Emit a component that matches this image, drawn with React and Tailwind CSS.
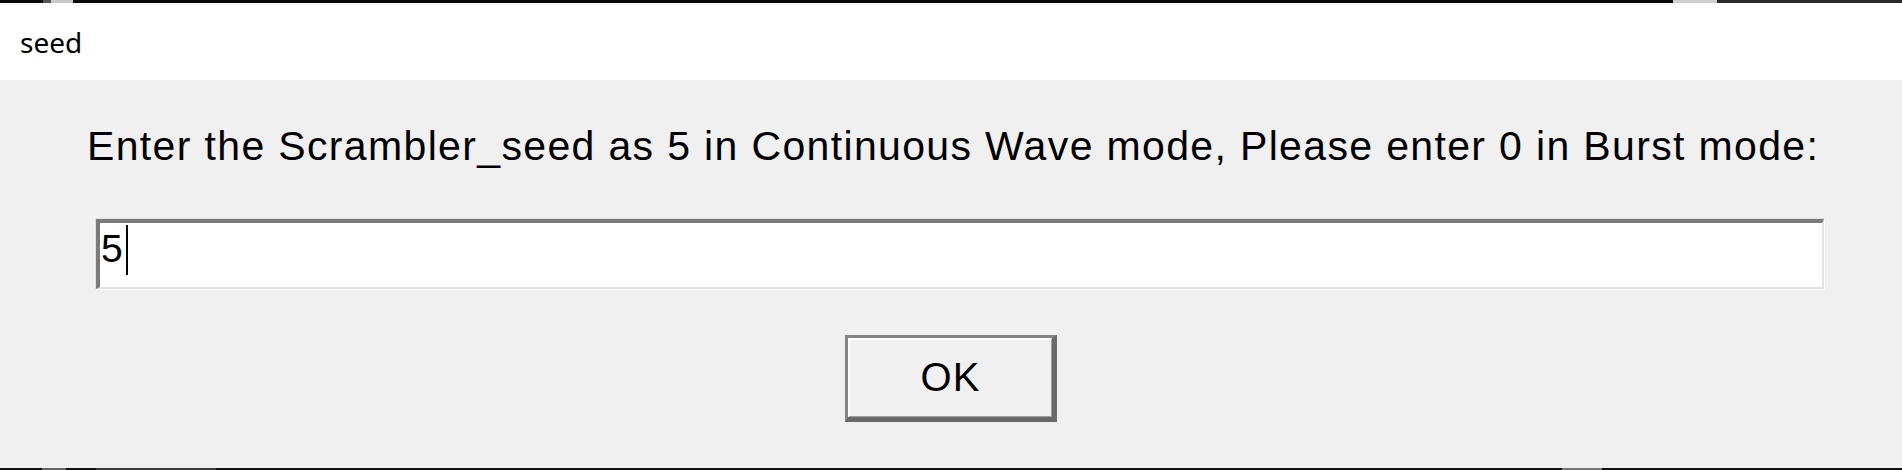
import React from "react";

const SANS = { fontFamily: '"Liberation Sans", Arial, sans-serif' };

const TopStrip = () => (
  <div className="flex h-[3px] w-full bg-[#0a0a0a]">
    <div className="w-[43px]" />
    <div className="w-[8px] bg-[#555]" />
    <div className="w-[22px] bg-[#c8c8c8]" />
    <div className="flex-1" />
    <div className="w-[44px] bg-[#d0d0d0]" />
    <div className="w-[185px] bg-[#2a2a2a]" />
  </div>
);

const BottomStrip = () => (
  <div className="flex h-[2px] w-full bg-[#111]">
    <div className="w-[42px]" />
    <div className="w-[24px] bg-[#666]" />
    <div className="w-[30px]" />
    <div className="w-[120px] bg-[#3a3a3a]" />
    <div className="flex-1" />
    <div className="w-[40px] bg-[#777]" />
    <div className="w-[300px]" />
  </div>
);

const SeedDialog = ({ title, prompt, value, onOk }) => (
  <div className="flex h-[470px] w-full flex-col overflow-hidden bg-[#f0f0f0]">
    <TopStrip />

    <div
      className="h-[77px] bg-white pl-[20px] pt-[25px] text-[28px] leading-none text-black"
      style={{ fontFamily: '"Noto Sans", "Open Sans", sans-serif' }}
    >
      {title}
    </div>

    <div className="flex flex-1 flex-col items-center" style={SANS}>
      <p className="mt-[46px] w-full pl-[87px] text-[41px] leading-none tracking-[1.35px] whitespace-nowrap text-black">
        {prompt}
      </p>

      {/* sunken entry */}
      <div className="mt-[51px] ml-[95px] self-start w-[1730px] border-t border-l border-r border-b border-t-[#e0e0e0] border-l-[#e0e0e0] border-r-white border-b-white">
        <div className="flex h-[70px] items-start border-t-4 border-l-4 border-r-2 border-b-2 border-t-[#7a7a7a] border-l-[#7a7a7a] border-r-[#e3e3e3] border-b-[#e3e3e3] bg-white pl-[1px]">
          <span className="mt-[6px] text-[39px] leading-none text-black">{value}</span>
          <span className="mt-[2px] ml-[3px] h-[50px] w-[2px] bg-black" />
        </div>
      </div>

      {/* raised button */}
      <button
        type="button"
        onClick={onOk}
        className="mt-[45px] h-[87px] w-[212px] border-t-[3px] border-l-[3px] border-r-[5px] border-b-[5px] border-t-[#858585] border-l-[#858585] border-r-[#696969] border-b-[#696969] p-0"
      >
        <div className="flex h-full w-full items-center justify-center border-t-2 border-l-2 border-r border-b border-t-white border-l-white border-r-[#a0a0a0] border-b-[#a0a0a0] bg-[#f0f0f0] pb-[2px] text-[40px] leading-none tracking-[1px] text-black">
          OK
        </div>
      </button>

      <div className="flex-1" />
    </div>

    <BottomStrip />
  </div>
);

export default function App() {
  return (
    <SeedDialog
      title="seed"
      prompt="Enter the Scrambler_seed as 5 in Continuous Wave mode, Please enter 0 in Burst mode:"
      value="5"
      onOk={() => {}}
    />
  );
}
